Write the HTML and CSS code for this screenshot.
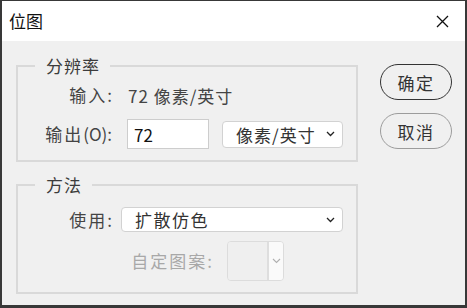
FILE: index.html
```html
<!DOCTYPE html>
<html lang="zh-CN">
<head>
  <meta charset="UTF-8" />
  <title>位图</title>
  <link rel="stylesheet" href="styles.css">
</head>
<body>
  <div class="window">
    <div class="titlebar">
      <span class="title">位图</span>
      <svg class="close" width="13" height="13" viewBox="0 0 13 13">
        <path d="M1 1 L12 12 M12 1 L1 12" stroke="#111" stroke-width="1.3" fill="none"/>
      </svg>
    </div>

    <div class="content">
      <div class="groups">
        <fieldset class="group res">
          <legend>分辨率</legend>
          <div class="row row-in">
            <span class="label">输入:</span>
            <span class="value">72 像素/英寸</span>
          </div>
          <div class="row row-out">
            <label class="label">输出<span class="latin">(O)</span>:</label>
            <input class="num" type="text" value="72">
            <div class="select unit">
              <span>像素/英寸</span>
              <svg class="chev" width="9" height="6" viewBox="0 0 9 6"><path d="M1 1 L4.5 4.5 L8 1" stroke="#222" stroke-width="1.3" fill="none"/></svg>
            </div>
          </div>
        </fieldset>

        <fieldset class="group method">
          <legend>方法</legend>
          <div class="row row-use">
            <label class="label">使用:</label>
            <div class="select wide">
              <span>扩散仿色</span>
              <svg class="chev" width="9" height="6" viewBox="0 0 9 6"><path d="M1 1 L4.5 4.5 L8 1" stroke="#222" stroke-width="1.3" fill="none"/></svg>
            </div>
          </div>
          <div class="row row-pat">
            <label class="label disabled">自定图案:</label>
            <div class="pattern">
              <span class="swatch"></span>
              <span class="drop">
                <svg width="9" height="6" viewBox="0 0 9 6"><path d="M1 1 L4.5 4.5 L8 1" stroke="#b0b0b0" stroke-width="1.1" fill="none"/></svg>
              </span>
            </div>
          </div>
        </fieldset>
      </div>

      <div class="buttons">
        <button class="btn primary">确定</button>
        <button class="btn">取消</button>
      </div>
    </div>
  </div>
</body>
</html>
```

FILE: styles.css
```css
* { box-sizing: border-box; }
html, body { margin: 0; padding: 0; }
body { font-family: "Noto Sans CJK SC", "Noto Sans", sans-serif; font-size: 17px; color: #3c3c3c; background: #f0f0f0; }

.window { width: 467px; height: 308px; border-style: solid; border-color: #383838; border-width: 1px 2px 3px 2px; background: #f0f0f0; display: flex; flex-direction: column; }

.titlebar { height: 40px; flex: none; background: #fff; display: flex; align-items: center; justify-content: space-between; padding: 0 16px 0 7px; }
.title { font-size: 17px; color: #111; line-height: 20px; }
.close { display: block; }

.content { flex: 1; display: flex; padding: 15px 0 0 14px; }
.groups { width: 342px; }
.buttons { margin-left: 22px; padding-top: 8px; display: flex; flex-direction: column; gap: 13px; }

.group { margin: 0; padding: 0 0 11px 0; border: 2px solid #d9d9d9; min-width: 0; }
.group legend { margin-left: 17px; padding: 0 10px 0 11px; font-size: 17px; line-height: 20px; color: #3c3c3c; letter-spacing: 1px; }
.method { margin-top: 13px; }

.row { display: flex; align-items: center; }
.label { width: 96px; flex: none; text-align: right; line-height: 24px; color: #444; letter-spacing: 2px; }
.latin { letter-spacing: 0; }
.disabled { color: #a8a8a8; width: 196px; }

.row-in { margin-top: 7px; height: 24px; }
.row-in .value { margin-left: 14px; color: #444; letter-spacing: 1px; }
.row-out { margin-top: 12px; }
.row-use { margin-top: 12px; }
.row-pat { margin-top: 9px; }

.num { margin-left: 13px; width: 82px; height: 30px; border: 1px solid #cdcdcd; background: #fff; padding: 0 6px; font: inherit; color: #111; outline: none; }

.select { height: 27px; border: 1px solid #d2d2d2; border-radius: 4px; background: #fff; display: flex; align-items: center; justify-content: space-between; padding: 0 7px 0 13px; color: #333; }
.unit { margin-left: 13px; width: 121px; letter-spacing: 1px; }
.wide { margin-left: 7px; width: 222px; height: 25px; letter-spacing: 1.5px; }
.chev { display: block; }

.pattern { margin-left: 13px; width: 57px; height: 40px; border: 1px solid #dcdcdc; border-radius: 4px; display: flex; overflow: hidden; }
.swatch { flex: 1; background: #efefef; }
.drop { width: 16px; border-left: 2px solid #dedede; background: #fafafa; display: flex; align-items: center; justify-content: center; }

.btn { width: 72px; height: 36px; border-radius: 18px; border: 1px solid #9c9c9c; background: #f0f0f0; font: inherit; font-size: 17px; color: #333; padding: 0; letter-spacing: 1.5px; }
.primary { border: 1.5px solid #333; }
```
